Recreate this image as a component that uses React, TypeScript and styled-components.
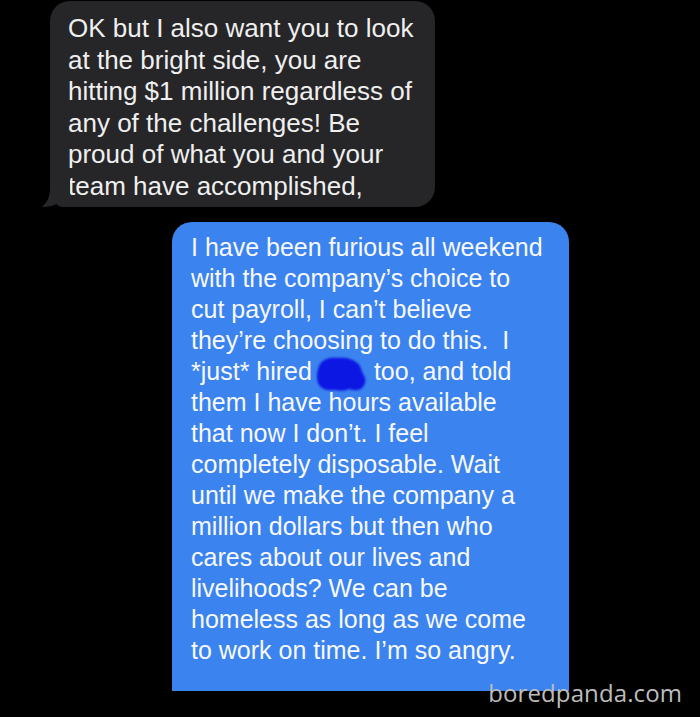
import React from "react";
import styled, { createGlobalStyle } from "styled-components";

const GlobalStyle = createGlobalStyle`
  html, body {
    margin: 0;
    padding: 0;
    background: #000;
  }
`;

const Page = styled.div`
  position: relative;
  width: 700px;
  height: 717px;
  overflow: hidden;
  background: #000;
  display: flex;
  flex-direction: column;
  align-items: flex-start;
  font-family: "Liberation Sans", Arial, sans-serif;
`;

const Bubble = styled.div<{ $variant: "in" | "out" }>`
  position: relative;
  box-sizing: border-box;
  display: flex;
  flex-direction: column;
  color: ${(p) => (p.$variant === "in" ? "#efefef" : "#f7f9ff")};
  background: ${(p) => (p.$variant === "in" ? "#262628" : "#3b83ee")};
  margin-left: ${(p) => (p.$variant === "in" ? "50px" : "172px")};
  margin-top: ${(p) => (p.$variant === "in" ? "1px" : "15px")};
  width: ${(p) => (p.$variant === "in" ? "385px" : "397px")};
  height: ${(p) => (p.$variant === "in" ? "206px" : "469px")};
  padding: ${(p) => (p.$variant === "in" ? "12px 0 0 18px" : "10px 0 0 19px")};
  border-radius: ${(p) => (p.$variant === "in" ? "20px" : "20px 20px 0 0")};
  font-size: ${(p) => (p.$variant === "in" ? "26px" : "25px")};
  line-height: ${(p) => (p.$variant === "in" ? "31.5px" : "31px")};
`;

const Line = styled.span`
  display: block;
  white-space: nowrap;
`;

const Tail = styled.svg`
  position: absolute;
  left: -10px;
  bottom: 0;
  width: 30px;
  height: 30px;
`;

const Redaction = styled.span`
  position: relative;
  display: inline-block;
  width: 54px;
  height: 31px;
  margin: 0 5px 0 3px;
  vertical-align: top;
`;

const Blob = styled.svg`
  position: absolute;
  left: 0;
  top: 0;
  width: 54px;
  height: 36px;
  overflow: visible;
  filter: blur(1.1px);
`;

const Watermark = styled.div`
  position: absolute;
  right: 18px;
  bottom: 10px;
  font-family: "Open Sans", "DejaVu Sans", sans-serif;
  font-size: 24px;
  line-height: 28px;
  color: #bdbdbd;
  letter-spacing: 0.1px;
`;

const incoming = [
  "OK but I also want you to look",
  "at the bright side, you are",
  "hitting $1 million regardless of",
  "any of the challenges! Be",
  "proud of what you and your",
  "team have accomplished,",
];

const outgoingBefore = [
  "I have been furious all weekend",
  "with the company\u2019s choice to",
  "cut payroll, I can\u2019t believe",
  "they\u2019re choosing to do this.\u00a0 I",
];

const outgoingAfter = [
  "them I have hours available",
  "that now I don\u2019t. I feel",
  "completely disposable. Wait",
  "until we make the company a",
  "million dollars but then who",
  "cares about our lives and",
  "livelihoods? We can be",
  "homeless as long as we come",
  "to work on time. I\u2019m so angry.",
];

export default function App() {
  return (
    <>
      <GlobalStyle />
      <Page>
        <Bubble $variant="in">
          {incoming.map((t) => (
            <Line key={t}>{t}</Line>
          ))}
          <Tail viewBox="0 0 30 30">
            <path
              d="M10 0 L30 0 L30 30 L22 30 C19.5 29.5 18 28.5 16.5 27 C12.5 29.3 7.5 30 1.5 30 C7 26 10 20 10 11 Z"
              fill="#262628"
            />
          </Tail>
        </Bubble>
        <Bubble $variant="out">
          {outgoingBefore.map((t) => (
            <Line key={t}>{t}</Line>
          ))}
          <Line>
            *just* hired
            <Redaction>
              <Blob viewBox="0 0 54 36">
                <path
                  d="M5 8 C9 2 17 1 24 2 C31 1 37 3 41 6 C46 9 46 14 48 18 C51 22 51 27 48 31 C45 35 39 35 34 33 C28 36 22 34 17 34 C11 35 5 32 3 27 C1 22 2 14 5 8 Z"
                  fill="#0d17e4"
                />
              </Blob>
            </Redaction>
            too, and told
          </Line>
          {outgoingAfter.map((t) => (
            <Line key={t}>{t}</Line>
          ))}
        </Bubble>
        <Watermark>boredpanda.com</Watermark>
      </Page>
    </>
  );
}
